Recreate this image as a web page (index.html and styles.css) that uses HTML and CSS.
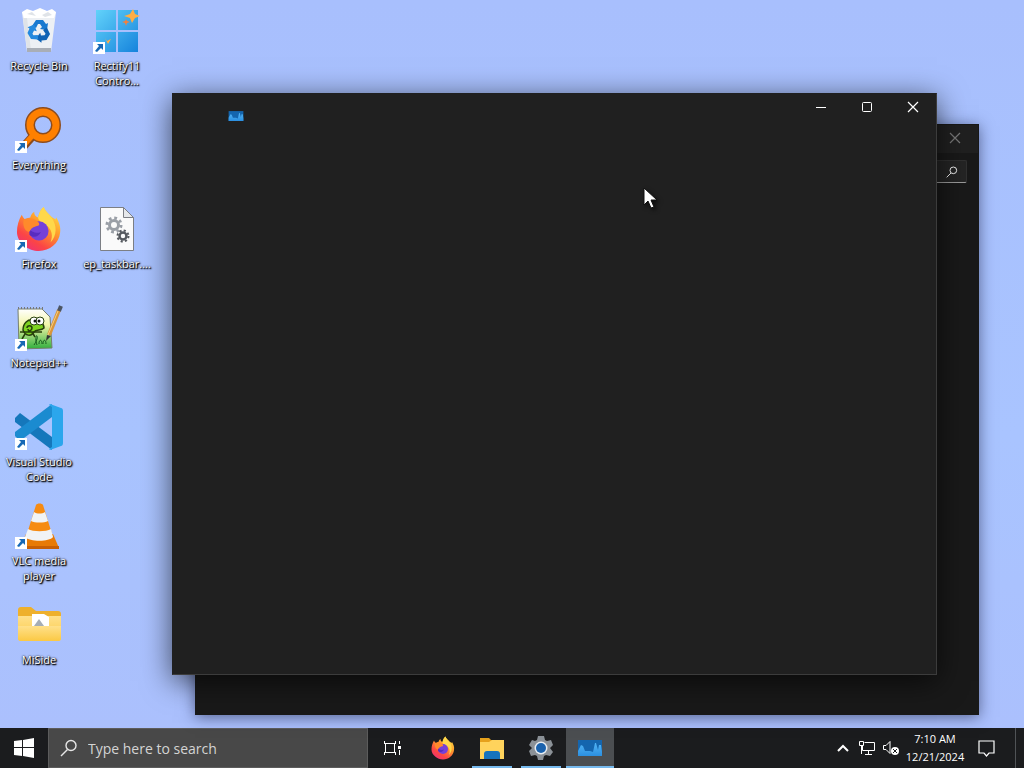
FILE: index.html
```html
<!DOCTYPE html>
<html lang="en">
<head>
    <meta charset="UTF-8">
    <meta name="viewport" content="width=device-width, initial-scale=1.0">
    <title>Desktop</title>
    <link rel="stylesheet" href="styles.css">
</head>
<body>
    <!-- Shared icons -->
    <svg class="sprite" width="0" height="0" aria-hidden="true">
        <defs>
            <linearGradient id="ff-body" x1="0.85" y1="0" x2="0.2" y2="1">
                <stop offset="0" stop-color="#ffe64a"/>
                <stop offset="0.4" stop-color="#ff9a2c"/>
                <stop offset="0.75" stop-color="#fb4545"/>
                <stop offset="1" stop-color="#ee2f7b"/>
            </linearGradient>
            <linearGradient id="tile" x1="0" y1="0" x2="1" y2="1">
                <stop offset="0" stop-color="#62d2fa"/>
                <stop offset="1" stop-color="#1583dc"/>
            </linearGradient>
            <linearGradient id="folder" x1="0" y1="0" x2="0" y2="1">
                <stop offset="0" stop-color="#ffe08a"/>
                <stop offset="1" stop-color="#fbc944"/>
            </linearGradient>
            <linearGradient id="page" x1="0" y1="0" x2="0" y2="1">
                <stop offset="0" stop-color="#ffffff"/>
                <stop offset="0.4" stop-color="#f2f5a8"/>
                <stop offset="1" stop-color="#2fae3c"/>
            </linearGradient>
            <linearGradient id="chart" x1="0" y1="0" x2="0" y2="1">
                <stop offset="0" stop-color="#52b4f5"/>
                <stop offset="1" stop-color="#2b8fe0"/>
            </linearGradient>
        </defs>
        <symbol id="firefox" viewBox="0 0 48 48">
            <path fill="url(#ff-body)" d="M6 9c1 2 2 4 4 5 1-1 4-2 5-2 0-1 1-4 4-6 0 3 1 5 4 6 1-5 3-9 6-11 1 4 5 7 9 11 2 1 3 2 3 2l1-2c3 5 5 10 4 16-1 11-11 19-22 19S1 38 1 27c0-7 2-13 5-18z"/>
            <path fill="#ffd84a" d="M29 1c1 4 5 7 8 11 6 8 6 19-1 26 3-8 1-13-3-17-4-3-10-5-10-9 1-5 3-9 6-11z"/>
            <circle cx="24" cy="26" r="10" fill="#7540d8"/>
            <path fill="#592cc0" d="M14 24c3 4 8 5 12 3-2 5-8 7-12 3z"/>
            <path fill="#ff8a2b" d="M8 14c4-2 10-1 13 1 2 1 4 3 3 5-1 1-5 1-7 3-2 1-2 4-4 4-5-2-6-8-5-13z"/>
        </symbol>
        <symbol id="shortcut" viewBox="0 0 12 12">
            <path fill="#fff" d="M0 0h12v12H0z"/>
            <path fill="#1768b5" d="M4 2h6v6L8 6 4 10 2 9l4-5z"/>
        </symbol>
        <symbol id="activity" viewBox="0 0 26 18">
            <path fill="#1465ae" d="M1 1h24v16H1z"/>
            <path fill="url(#chart)" d="M1 17v-5l3-6 2 1 2 5h5l3 1 2-9h1l2 7 1-5h2l1 7v4z"/>
        </symbol>
        <symbol id="magnifier" viewBox="0 0 18 18">
            <g fill="none" stroke="currentColor" stroke-width="1.4">
                <circle cx="11" cy="6.500" r="5"/>
                <path d="M7.500 10.500 1 17"/>
            </g>
        </symbol>
        <symbol id="close" viewBox="0 0 12 12">
            <path fill="none" stroke="currentColor" stroke-width="1.200" d="m1 1 10 10M11 1 1 11"/>
        </symbol>
    </svg>

    <main class="desktop">
        <div class="icons">
            <button class="icon first">
                <svg class="glyph" viewBox="0 0 48 48">
                    <path fill="#edf0f4" d="M7 5h34l-5 40H12z"/>
                    <path fill="#fff" d="m7 5 5-3 6 2 7-3 7 3 5-2 4 3-2 6H9z"/>
                    <path fill="#dfe3e8" d="m12 7 5-2 4 4zm15 1 6-3 4 3-7 2zM8 11h4l4 32h-4z"/>
                    <path fill="#a9aeb6" d="M12 41h24v4H12z"/>
                    <g fill="#1879d0">
                        <path d="m17 19 4-6h7l3 4 2-1-1 7-7-1 2-2-2-3h-2l-2 4z"/>
                        <path fill="#0f62b4" d="m17 19 4-6h7l3 4 2-1-1 7-7-1 2-2-2-3h-2l-2 4z" transform="rotate(120 24 24)"/>
                        <path fill="#2489de" d="m17 19 4-6h7l3 4 2-1-1 7-7-1 2-2-2-3h-2l-2 4z" transform="rotate(240 24 24)"/>
                    </g>
                </svg>
                <span>Recycle Bin</span>
            </button>
            <button class="icon">
                <svg class="glyph" viewBox="0 0 48 48">
                    <path fill="url(#tile)" d="M3 3h20v20H3zm22 0h20v20H25zM3 25h20v20H3zm22 0h20v20H25z"/>
                    <path fill="#ffae45" d="m40 2 2 5 5 2-5 2-3 5-2-5-6-2 6-2zM12 31l2 3 4-2-3 5z"/>
                    <path fill="#f4803c" d="m33 12 1 2 3 1-3 1-1 3-1-3-3-1 3-1z"/>
                    <use href="#shortcut" x="0" y="35" width="12" height="12"/>
                </svg>
                <span>Rectify11<br>Contro...</span>
            </button>
            <button class="icon first">
                <svg class="glyph" viewBox="0 0 48 48">
                    <path stroke="#8d4c1d" stroke-width="8" d="m17 31-8 9"/>
                    <circle cx="28" cy="19" r="13" fill="none" stroke="#8d4c1d" stroke-width="10"/>
                    <circle cx="28" cy="19" r="13" fill="none" stroke="#ff8000" stroke-width="7"/>
                    <path stroke="#ff8000" stroke-width="5" d="M19 28 9 39"/>
                    <use href="#shortcut" x="0" y="35" width="12" height="12"/>
                </svg>
                <span>Everything</span>
            </button>
            <button class="icon first">
                <svg class="glyph" viewBox="0 0 48 48">
                    <use href="#firefox" x="1" y="1" width="46" height="46"/>
                    <use href="#shortcut" x="0" y="35" width="12" height="12"/>
                </svg>
                <span>Firefox</span>
            </button>
            <button class="icon">
                <svg class="glyph" viewBox="0 0 48 48">
                    <path fill="#fafafa" stroke="#7c7f85" d="M7.500 2.500h23l10 10v33h-33z"/>
                    <path fill="#e6e8eb" stroke="#7c7f85" d="M30.500 2.500v10h10z"/>
                    <g fill="none" stroke="#9a9fa6">
                        <circle cx="21" cy="20" r="4.500" stroke-width="3"/>
                        <circle cx="21" cy="20" r="7" stroke-width="3" stroke-dasharray="2.750 2.750"/>
                    </g>
                    <g fill="none" stroke="#55595f">
                        <circle cx="30" cy="31" r="3.500" stroke-width="2.500"/>
                        <circle cx="30" cy="31" r="5.500" stroke-width="2" stroke-dasharray="2.160 2.160"/>
                    </g>
                </svg>
                <span>ep_taskbar....</span>
            </button>
            <button class="icon first">
                <svg class="glyph" viewBox="0 0 48 48">
                    <path fill="url(#page)" stroke="#77806d" d="M3 5h24l8 8 2 31-33 1z"/>
                    <path fill="none" stroke="#777" stroke-width="2" stroke-dasharray="1 2" d="M3 4h25"/>
                    <path fill="#7ed321" stroke="#27400b" stroke-width="1.500" d="M8 26c0-7 5-11 10-10 6 0 11 3 11 8-3 3-8 1-10 4-3 5-9 4-11-2z"/>
                    <path fill="none" stroke="#27400b" stroke-width="1.500" d="M5 28h22M12 24c0-3 5-3 5 0s-4 4-4 1M10 30l-3 5M17 28l3 5"/>
                    <circle cx="19" cy="17" r="4" fill="#fff" stroke="#27400b"/>
                    <circle cx="25" cy="17" r="4" fill="#fff" stroke="#27400b"/>
                    <circle cx="20" cy="17" r="1.500" fill="#111"/>
                    <circle cx="24" cy="17" r="1.500" fill="#111"/>
                    <path fill="none" stroke="#145c1d" d="M19 41c2-3 4-7 3-9s-2 4 0 9m2-1c0-5 3-5 3 0m1 0c0-5 3-5 3 0"/>
                    <path stroke="#d9963c" stroke-width="4" d="M44 6 34 31"/>
                    <path stroke="#f7cf80" d="M43 7 33 31"/>
                    <path stroke="#4c5563" stroke-width="4" d="m46 2-2 5"/>
                    <path fill="#333" d="m32 31 4 1-5 5z"/>
                    <use href="#shortcut" x="0" y="35" width="12" height="12"/>
                </svg>
                <span>Notepad++</span>
            </button>
            <button class="icon first">
                <svg class="glyph" viewBox="0 0 48 48">
                    <path fill="#1577bb" d="m0 15 5-5 32 24v13L0 19z"/>
                    <path fill="#1b8bd0" d="m0 33 5 5 32-24V1L0 29z"/>
                    <path fill="#2ba6ec" d="m35 1 11 4c1 0 2 1 2 3v32c0 2-1 3-2 3l-11 4-1-1 3-2V4l-3-2z"/>
                    <use href="#shortcut" x="0" y="35" width="12" height="12"/>
                </svg>
                <span>Visual Studio<br>Code</span>
            </button>
            <button class="icon first">
                <svg class="glyph" viewBox="0 0 48 48">
                    <path fill="#e87a05" d="m11 32-6 14h39l-6-14z"/>
                    <path fill="#c85f04" d="M5 44h39v3H5z"/>
                    <path fill="#f68b12" d="M21 3c1-2 6-2 7 0l10 32c-4 5-23 5-27 0z"/>
                    <path fill="#f1f3f5" d="m19 10-3 9c4 2 13 2 17 0l-3-9c-3 2-8 2-11 0zM13 27l-3 8c5 5 24 5 28 0l-2-8c-5 3-18 3-23 0z"/>
                    <use href="#shortcut" x="0" y="35" width="12" height="12"/>
                </svg>
                <span>VLC media<br>player</span>
            </button>
            <button class="icon first">
                <svg class="glyph" viewBox="0 0 48 48">
                    <path fill="#eeb02c" d="M3 9c0-2 1-3 3-3h10l5 4h22c2 0 3 1 3 3v8H3z"/>
                    <path fill="url(#folder)" d="M3 15h43v22c0 2-1 3-3 3H6c-2 0-3-1-3-3z"/>
                    <path fill="#fff" d="M17 13h12l5 3v9H17z"/>
                    <path fill="#a5adb5" d="m19 25 5-7 5 7z"/>
                    <path fill="url(#folder)" d="M3 25h43v12c0 2-1 3-3 3H6c-2 0-3-1-3-3z"/>
                </svg>
                <span>MiSide</span>
            </button>
        </div>

        <section class="window back" aria-label="Background window">
            <header class="titlebar">
                <button aria-label="Close"><svg width="12" height="12"><use href="#close"/></svg></button>
            </header>
            <div class="find">
                <input type="text" aria-label="Find">
                <button aria-label="Find"><svg width="12" height="12"><use href="#magnifier"/></svg></button>
            </div>
        </section>

        <section class="window front" aria-label="Task Manager">
            <header class="titlebar">
                <svg class="app" width="16" height="12"><use href="#activity"/></svg>
                <button aria-label="Minimize"><svg width="12" height="12"><path d="M1 6.500h10" stroke="currentColor"/></svg></button>
                <button aria-label="Maximize"><svg width="12" height="12"><rect x="1.500" y="1.500" width="9" height="9" rx="1" fill="none" stroke="currentColor"/></svg></button>
                <button aria-label="Close"><svg width="12" height="12"><use href="#close"/></svg></button>
            </header>
        </section>

        <svg class="cursor" width="16" height="24" viewBox="0 0 16 24">
            <path fill="#fff" stroke="#111" d="M1 1v17l4-4 3 7 3-1-3-7h6z"/>
        </svg>
    </main>

    <footer class="taskbar">
        <button class="start" aria-label="Start">
            <svg width="20" height="20" viewBox="0 0 20 20"><path fill="#fff" d="m0 3 8-1v7H0zm9-1 11-2v9H9zM0 10h8v8l-8-1zm9 0h11v10L9 18z"/></svg>
        </button>
        <label class="search">
            <svg width="18" height="18"><use href="#magnifier"/></svg>
            <input type="text" placeholder="Type here to search" aria-label="Type here to search">
        </label>
        <button class="view" aria-label="Task View">
            <svg width="18" height="16" viewBox="0 0 18 16">
                <path fill="none" stroke="#fff" d="M2.500 3.500h9v9h-9zM1 3.500h12M1 12.500h12M1.500 1v3M12.500 1v3M1.500 12v3M12.500 12v3M16.500 1v3M16.500 10v5"/>
                <path fill="#fff" d="M15 6h3v3h-3z"/>
            </svg>
        </button>
        <nav class="apps" aria-label="Apps">
            <button aria-label="Firefox"><svg width="24" height="24"><use href="#firefox"/></svg></button>
            <button class="open" aria-label="File Explorer">
                <svg width="26" height="24" viewBox="0 0 26 24">
                    <path fill="#e6a11c" d="M1 2h9l2 2h13v6H1z"/>
                    <path fill="#ffd35c" d="M1 6h9l3-2h12v19H1z"/>
                    <path fill="#1673bd" d="M5 23v-5c0-2 1-3 3-3h10c2 0 3 1 3 3v5z"/>
                </svg>
            </button>
            <button class="open" aria-label="Settings">
                <svg width="24" height="24" viewBox="0 0 24 24">
                    <path fill="#8b9197" d="M9 0h6l1 4 2 1 4-1 2 5-3 3 3 4-3 4-4-1-2 1-1 4H9l-1-4-2-1-4 1-2-5 3-3-3-3 3-5 3 1 2-1z"/>
                    <circle cx="12" cy="12" r="6.500" fill="#e8edf2"/>
                    <circle cx="12" cy="12" r="5" fill="#1a62ad"/>
                </svg>
            </button>
            <button class="open active" aria-label="Task Manager">
                <svg width="26" height="18"><use href="#activity"/></svg>
            </button>
        </nav>
        <div class="tray">
            <button aria-label="Show hidden icons"><svg width="12" height="8"><path fill="none" stroke="#fff" stroke-width="2" d="m1 7 5-5 5 5"/></svg></button>
            <button aria-label="Network">
                <svg width="16" height="14" viewBox="0 0 16 14"><path fill="none" stroke="#fff" d="M5.500 1.500h10v8h-12V5M.500.500h4v4h-4zM2.500 5v8M9.500 10v3M6 13.500h7"/></svg>
            </button>
            <button aria-label="Volume">
                <svg width="16" height="14" viewBox="0 0 16 14"><path fill="none" stroke="#fff" d="M.500 4.500H3l4-4v12l-4-4H.500z"/><circle cx="12" cy="10" r="4" fill="#fff"/><path stroke="#1b1c1e" d="m10 8 4 4m0-4-4 4"/></svg>
            </button>
            <button class="clock"><time>7:10 AM</time><time>12/21/2024</time></button>
            <button class="notes" aria-label="Notifications">
                <svg width="18" height="17" viewBox="0 0 18 17"><path fill="none" stroke="#fff" stroke-width="1.200" d="M1 1h15v12h-5l-2.500 3L6 13H1z"/></svg>
            </button>
            <button class="peek" aria-label="Show desktop"></button>
        </div>
    </footer>
</body>
</html>
```

FILE: styles.css
```css
* {
    box-sizing: border-box;
}

body {
    margin: 0;
    height: 100vh;
    display: flex;
    flex-direction: column;
    overflow: hidden;
    font-family: "Open Sans", "Noto Sans", sans-serif;
    font-size: 11px;
    color: #fff;
    background-color: #a9c1fd;
}

button {
    display: flex;
    align-items: center;
    justify-content: center;
    margin: 0;
    padding: 0;
    border: 0;
    background: none;
    color: inherit;
    font: inherit;
}

input {
    min-width: 0;
    border: 0;
    outline: 0;
    background: none;
    color: inherit;
    font: inherit;
}

.sprite {
    position: absolute;
}

/* Desktop */
.desktop {
    position: relative;
    flex: 1;
    min-height: 0;
    background: linear-gradient(#a8bffd, #a9c4ff 60%, #abc0fd);
}

.icons {
    display: grid;
    grid-template-columns: 78px 78px;
    grid-auto-rows: 99px;
    padding-top: 7px;
}

.icon {
    flex-direction: column;
    justify-content: flex-start;
    gap: 3px;
    line-height: 15px;
    white-space: nowrap;
    text-shadow: 0 0 2px #000, 1px 1px 1px #000, 1px 1px 2px #000;
}

.icon.first {
    grid-column: 1;
}

.glyph {
    width: 48px;
    height: 48px;
}

/* Windows */
.window {
    position: absolute;
    border: 1px solid #303030;
}

.titlebar {
    display: flex;
    justify-content: flex-end;
}

.titlebar button {
    width: 46px;
    height: 26px;
}

.back {
    inset: 124px 45px 13px 195px;
    background-color: #191919;
    border-color: #191919;
    box-shadow: 0 2px 14px rgba(30, 35, 70, 0.6);
}

.back .titlebar {
    height: 28px;
    background-color: #202020;
    color: #777;
}

.find {
    display: flex;
    width: 260px;
    height: 23px;
    margin: 7px 11px 0 auto;
    background-color: #242424;
    border: 1px solid #303030;
    border-bottom-color: #9a9a9a;
    border-radius: 2px;
}

.find input {
    flex: 1;
}

.find button {
    width: 28px;
}

.front {
    inset: 93px 87px 53px 172px;
    background-color: #202020;
    border-color: #202020 #3c3c3c #3c3c3c #202020;
    box-shadow: 0 6px 28px rgba(0, 0, 0, 0.65);
}

.front .app {
    margin: 16px auto 0 55px;
}

.cursor {
    position: absolute;
    top: 187px;
    left: 643px;
    filter: drop-shadow(2px 2px 2px rgba(0, 0, 0, 0.6));
}

/* Taskbar */
.taskbar {
    display: flex;
    height: 40px;
    background-color: #1b1c1e;
}

.start,
.view {
    width: 48px;
}

.search {
    display: flex;
    align-items: center;
    gap: 10px;
    width: 320px;
    padding: 0 11px;
    background-color: #484848;
    border: 1px solid #5c5c5c;
    color: #e6e6e6;
}

.search input {
    flex: 1;
    padding: 0;
    font-size: 14px;
}

.search input::placeholder {
    color: #d4d4d4;
}

.apps {
    display: flex;
    gap: 1px;
    margin-left: 3px;
}

.apps button {
    width: 48px;
}

.apps .open {
    background: linear-gradient(#76b9ed, #76b9ed) bottom / 40px 2px no-repeat;
}

.apps .active {
    background-color: #4b4e51;
    background-size: 48px 2px;
}

.tray {
    display: flex;
    margin-left: auto;
}

.tray button {
    width: 24px;
}

.tray .clock {
    flex-direction: column;
    width: 64px;
    line-height: 18px;
}

.tray .notes {
    width: 40px;
}

.tray .peek {
    width: 9px;
    margin-left: 8px;
    border-left: 1px solid #505356;
}
```
